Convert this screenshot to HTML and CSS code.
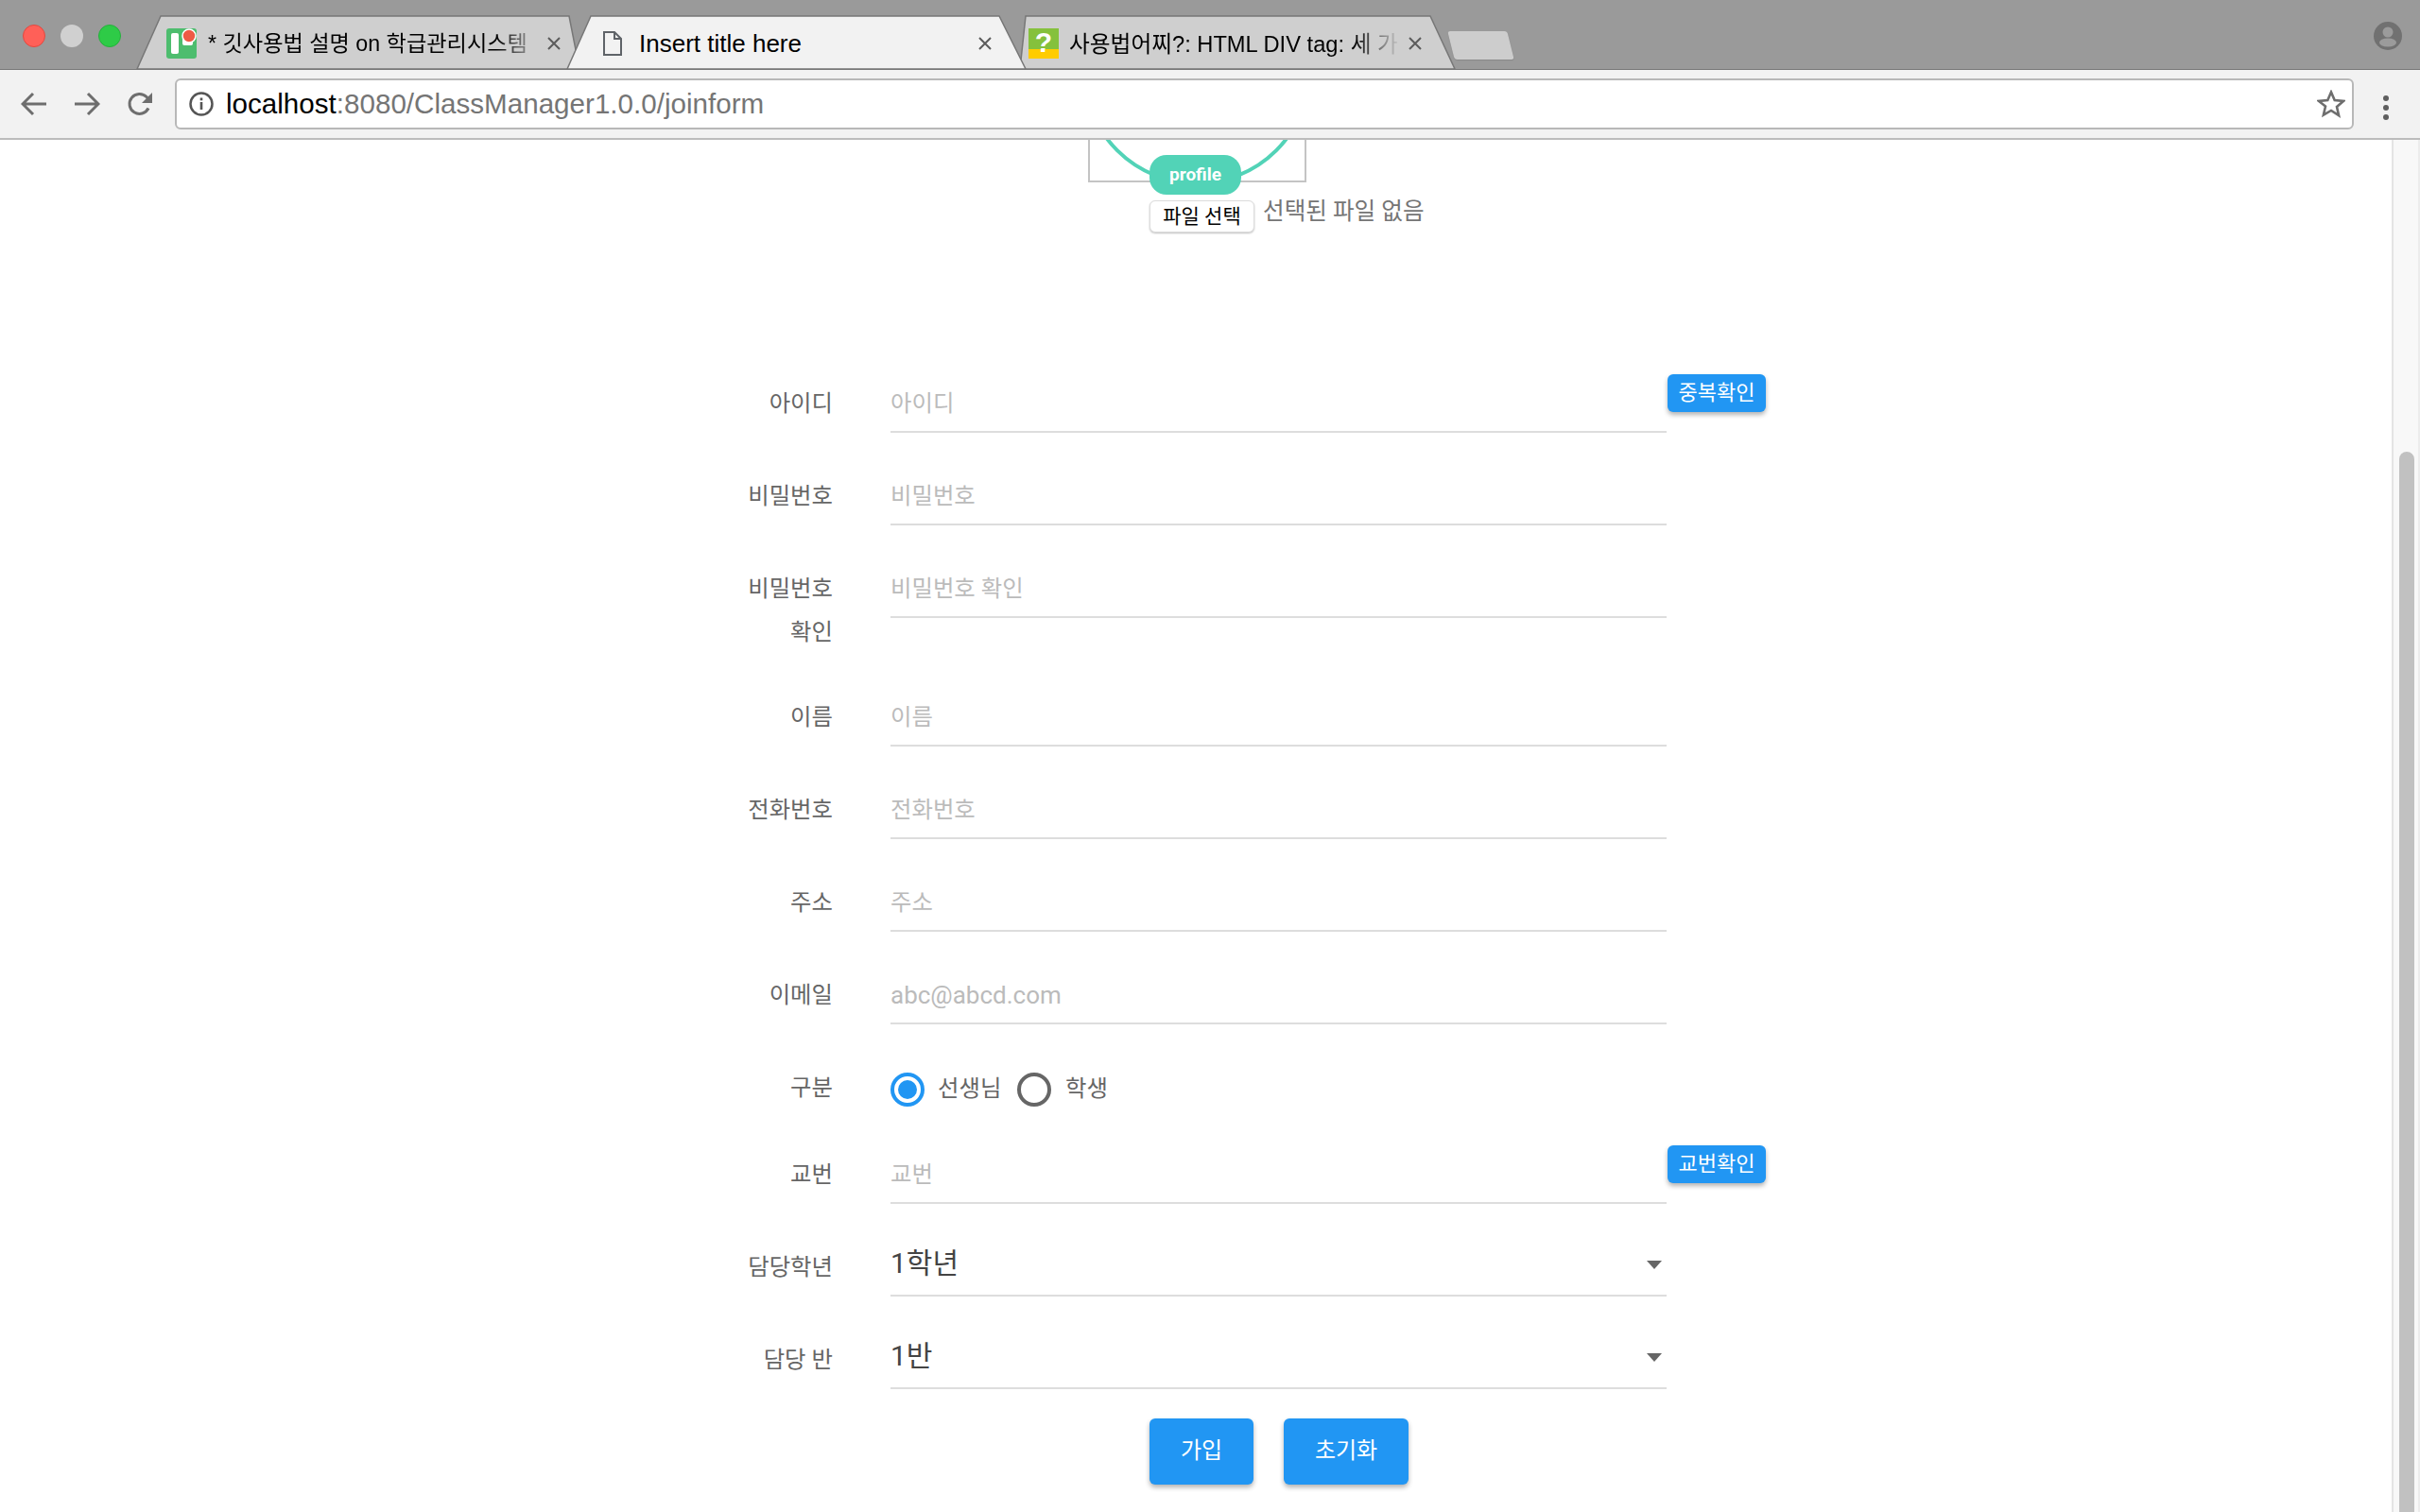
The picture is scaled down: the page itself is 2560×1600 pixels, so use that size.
FILE: index.html
```html
<!DOCTYPE html>
<html lang="ko">
<head>
<meta charset="utf-8">
<title>Insert title here</title>
<link rel="stylesheet" href="styles.css">
</head>
<body>
<div class="window">
  <header class="tabstrip">
    <div class="lights"><span class="light red"></span><span class="light grey"></span><span class="light green"></span></div>
    <div class="tabs">
      <div class="tab tab-one">
        <svg class="tab-shape" viewBox="0 0 468 57" preserveAspectRatio="none"><polygon points="0,57 25,1 457,1 468,57" fill="#cfcfcf" stroke="#777" stroke-width="1.5"/></svg>
        <svg class="favicon" viewBox="0 0 32 32"><rect width="32" height="32" rx="3" fill="#4dbd6e"/><rect x="5" y="5" width="8" height="22" rx="2" fill="#fff"/><rect x="17" y="5" width="11" height="13" rx="2" fill="#fff"/><circle cx="24" cy="8" r="7" fill="#ee5a45" stroke="#fff" stroke-width="1.5"/></svg>
        <span class="tab-title">* 깃사용법 설명 on 학급관리시스템</span>
        <svg class="close" viewBox="0 0 14 14"><path d="M1 1l12 12M13 1L1 13" stroke="#5c5c5c" stroke-width="2" fill="none"/></svg>
      </div>
      <div class="tab tab-two">
        <svg class="tab-shape" viewBox="0 0 485 57" preserveAspectRatio="none"><polygon points="0,57 25,1 457,1 485,57" fill="#f2f2f2" stroke="#777" stroke-width="1.5"/></svg>
        <svg class="file-icon" viewBox="0 0 20 26"><path d="M1 1h11l7 7v17H1zM12 1v7h7" fill="none" stroke="#5f6368" stroke-width="2"/></svg>
        <span class="tab-title">Insert title here</span>
        <svg class="close" viewBox="0 0 14 14"><path d="M1 1l12 12M13 1L1 13" stroke="#5c5c5c" stroke-width="2" fill="none"/></svg>
      </div>
      <div class="tab tab-three">
        <svg class="tab-shape" viewBox="0 0 454 57" preserveAspectRatio="none"><polygon points="0,57 -6,57 0,1 428,1 454,57" fill="#cfcfcf" stroke="#777" stroke-width="1.5"/></svg>
        <svg class="favicon" viewBox="0 0 32 32"><rect width="32" height="22" fill="#85c13c"/><rect y="22" width="32" height="10" fill="#ffcc00"/><text x="16" y="25" class="q-mark">?</text></svg>
        <span class="tab-title">사용법어찌?: HTML DIV tag: 세 가</span>
        <svg class="close" viewBox="0 0 14 14"><path d="M1 1l12 12M13 1L1 13" stroke="#5c5c5c" stroke-width="2" fill="none"/></svg>
      </div>
      <span class="new-tab"></span>
    </div>
    <svg class="avatar" viewBox="0 0 30 30"><circle cx="15" cy="15" r="15" fill="#717171"/><circle cx="15" cy="11" r="5.5" fill="#9b9b9b"/><ellipse cx="15" cy="22" rx="9" ry="4.5" fill="#9b9b9b"/></svg>
  </header>

  <nav class="toolbar">
    <svg class="nav-icon" viewBox="0 0 28 26"><path d="M27 13H3M13 2L2 13l11 11" fill="none" stroke="#6e6e6e" stroke-width="3"/></svg>
    <svg class="nav-icon" viewBox="0 0 28 26"><path d="M1 13h24M15 2l11 11-11 11" fill="none" stroke="#6e6e6e" stroke-width="3"/></svg>
    <svg class="nav-icon" viewBox="0 0 28 26"><path d="M23 17.500A10.500 10.500 0 1 1 21 5.500L24 9" fill="none" stroke="#6e6e6e" stroke-width="3"/><path d="M27 1v11H16z" fill="#6e6e6e"/></svg>
    <div class="omnibox">
      <svg class="info" viewBox="0 0 26 26"><circle cx="13" cy="13" r="11.500" fill="none" stroke="#555" stroke-width="2.500"/><rect x="11.700" y="11" width="2.600" height="8" fill="#555"/><rect x="11.700" y="6.500" width="2.600" height="2.800" fill="#555"/></svg>
      <span class="url"><span class="host">localhost</span>:8080/ClassManager1.0.0/joinform</span>
      <svg class="star" viewBox="0 0 30 30"><path d="M15 2.500l3.700 8.500 9.300.9-7 6.100 2.100 9.100L15 22l-8.100 4.700L9 17.500 2 11.900l9.300-.9z" fill="none" stroke="#6e6e6e" stroke-width="2.600"/></svg>
    </div>
    <div class="menu-dots"><span></span><span></span><span></span></div>
  </nav>

  <div class="viewport">
    <main class="page">
      <section class="profile">
        <div class="photo-box">
          <span class="photo-ring"></span>
          <span class="photo-tag">profile</span>
        </div>
        <div class="file-row">
          <span class="file-btn">파일 선택</span>
          <span class="file-name">선택된 파일 없음</span>
        </div>
      </section>

      <form class="form">
        <div class="row">
          <label class="label">아이디</label>
          <div class="field"><span class="placeholder">아이디</span></div>
          <span class="mini-btn">중복확인</span>
        </div>
        <div class="row">
          <label class="label">비밀번호</label>
          <div class="field"><span class="placeholder">비밀번호</span></div>
        </div>
        <div class="row">
          <label class="label">비밀번호 확인</label>
          <div class="field"><span class="placeholder">비밀번호 확인</span></div>
        </div>
        <div class="row">
          <label class="label">이름</label>
          <div class="field"><span class="placeholder">이름</span></div>
        </div>
        <div class="row">
          <label class="label">전화번호</label>
          <div class="field"><span class="placeholder">전화번호</span></div>
        </div>
        <div class="row">
          <label class="label">주소</label>
          <div class="field"><span class="placeholder">주소</span></div>
        </div>
        <div class="row">
          <label class="label">이메일</label>
          <div class="field"><span class="placeholder placeholder-latin">abc@abcd.com</span></div>
        </div>
        <div class="row radio-row">
          <label class="label">구분</label>
          <div class="radios">
            <span class="radio checked"></span><span class="radio-text">선생님</span>
            <span class="radio"></span><span class="radio-text">학생</span>
          </div>
        </div>
        <div class="row">
          <label class="label">교번</label>
          <div class="field"><span class="placeholder">교번</span></div>
          <span class="mini-btn">교번확인</span>
        </div>
        <div class="row">
          <label class="label">담당학년</label>
          <div class="field select"><span class="select-value">1학년</span><span class="caret"></span></div>
        </div>
        <div class="row">
          <label class="label">담당 반</label>
          <div class="field select"><span class="select-value">1반</span><span class="caret"></span></div>
        </div>
        <div class="actions">
          <span class="btn btn-join">가입</span>
          <span class="btn btn-reset">초기화</span>
        </div>
      </form>
    </main>
    <aside class="scrollbar"><span class="thumb"></span></aside>
  </div>
</div>
</body>
</html>
```

FILE: styles.css
```css
* { box-sizing: border-box; }
html, body { margin: 0; height: 100%; overflow: hidden; background: #fff; }
.window { display: flex; flex-direction: column; width: 2560px; height: 1600px; font-family: "Roboto", "Noto Sans CJK KR", sans-serif; }

/* tab strip */
.tabstrip { position: relative; display: flex; height: 74px; background: #9a9a9a; border-bottom: 1px solid #777; flex: none; }
.lights { display: flex; gap: 16px; padding: 26px 0 0 24px; width: 145px; flex: none; }
.light { width: 24px; height: 24px; border-radius: 50%; }
.red { background: #ff6058; border: 1px solid #e2483f; }
.grey { background: #d0d0d0; }
.green { background: #2ecb47; border: 1px solid #25b03c; }
.tabs { display: flex; align-items: flex-start; padding-top: 16px; flex: 1; }
.tab { position: relative; display: flex; align-items: center; height: 57px; padding-top: 3px; font: 24px "Liberation Sans", "Noto Sans CJK KR", sans-serif; color: #000; flex: none; }
.tab-shape { position: absolute; left: 0; top: 0; width: 100%; height: 100%; overflow: visible; }
.tab-one { width: 468px; padding-left: 31px; padding-right: 20px; margin-right: -13px; font-size: 23.200px; }
.tab-two { width: 485px; padding-left: 38px; padding-right: 36px; font-size: 26px; z-index: 2; }
.tab-three { width: 454px; padding-left: 3px; padding-right: 35px; font-size: 23.700px; }
.favicon, .file-icon, .tab-title, .close { position: relative; flex: none; }
.favicon { width: 32px; height: 32px; }
.file-icon { width: 20px; height: 26px; }
.tab-title { white-space: nowrap; }
.tab-one .tab-title { margin: -4px 0 0 12px; -webkit-mask-image: linear-gradient(90deg, #000 90%, rgba(0,0,0,.35)); mask-image: linear-gradient(90deg, #000 90%, rgba(0,0,0,.35)); }
.tab-two .tab-title { margin-left: 18px; }
.tab-three .tab-title { margin: -3px 0 0 11px; -webkit-mask-image: linear-gradient(90deg, #000 86%, rgba(0,0,0,.05)); mask-image: linear-gradient(90deg, #000 86%, rgba(0,0,0,.05)); }
.close { width: 14px; height: 14px; margin-left: auto; }
.q-mark { font: bold 30px "Liberation Sans", sans-serif; fill: #fff; text-anchor: middle; }
.new-tab { width: 63px; height: 30px; margin: 17px 0 0 -4px; background: #cdcdcd; border-radius: 3px; transform: skewX(14deg); box-shadow: 0 1px 1px #888; }
.avatar { position: absolute; right: 19px; top: 23px; width: 30px; height: 30px; }

/* toolbar */
.toolbar { display: flex; align-items: flex-start; height: 74px; background: #f2f2f2; border-bottom: 2px solid #bcbcbc; padding: 9px 0 0 22px; flex: none; }
.nav-icon { width: 28px; height: 26px; margin: 14px 28px 0 0; flex: none; }
.nav-icon:nth-child(3) { margin-right: 23px; }
.omnibox { display: flex; align-items: center; width: 2305px; height: 54px; background: #fff; border: 2px solid #b8b8b8; border-radius: 6px; padding: 0 7px 0 13px; flex: none; }
.info { width: 26px; height: 26px; flex: none; }
.url { margin-left: 13px; flex: 1; font: 29.600px "Liberation Sans", sans-serif; color: #757575; white-space: nowrap; }
.host { color: #000; }
.star { width: 30px; height: 30px; flex: none; }
.menu-dots { display: flex; flex-direction: column; gap: 4px; margin: 18px 0 0 31px; }
.menu-dots span { width: 6px; height: 6px; border-radius: 50%; background: #5f5f5f; }

/* viewport */
.viewport { display: flex; flex: 1; min-height: 0; }
.page { flex: 1; min-width: 0; overflow: hidden; }
.scrollbar { display: flex; width: 30px; flex: none; background: #f8f8f8; border-left: 2px solid #e4e4e4; border-right: 2px solid #ececec; padding: 330px 4px 0 6px; }
.thumb { width: 16px; height: 100%; border-radius: 8px 8px 0 0; background: #c1c1c1; }

/* profile */
.profile { display: flow-root; height: 256px; padding-left: 1151px; }
.photo-box { position: relative; width: 231px; height: 230px; margin-top: -185px; border: 2px solid #c4c4c4; }
.photo-ring { position: absolute; left: -8px; top: -11px; width: 242px; height: 242px; border-radius: 50%; border: 4px solid #52d3b7; }
.photo-tag { position: absolute; left: 63px; bottom: -15px; width: 97px; height: 42px; border-radius: 18px; background: #52d3b7; color: #fff; font-size: 19px; font-weight: 700; line-height: 42px; text-align: center; }
.file-row { display: flex; align-items: flex-start; margin: 19px 0 0 65px; }
.file-btn { width: 111px; height: 34px; background: #fff; border: 1px solid #ddd; border-radius: 6px; box-shadow: 0 1px 2px rgba(0,0,0,.25); color: #000; font-size: 21px; line-height: 32px; text-align: center; }
.file-name { margin: -5px 0 0 9px; font-size: 24.600px; line-height: 34px; color: #757575; white-space: nowrap; }

/* form */
.form { display: flex; flex-direction: column; gap: 44px; padding-left: 780px; }
.row { display: flex; align-items: flex-start; }
.radio-row { height: 48px; }
.label { width: 101px; flex: none; margin-right: 61px; text-align: right; font-size: 24.400px; line-height: 46px; color: #666; }
.field { display: flex; align-items: flex-start; width: 821px; height: 54px; flex: none; border-bottom: 2px solid #ddd; }
.placeholder { font-size: 24.400px; line-height: 46px; color: #bbb; }
.placeholder-latin { font-size: 26px; }
.mini-btn { width: 104px; height: 40px; flex: none; margin: -8px 0 0 1px; background: #2196f3; border-radius: 6px; box-shadow: 0 3px 5px rgba(0,0,0,.3); color: #fff; font-size: 22px; line-height: 40px; text-align: center; }
.radios { display: flex; align-items: center; height: 36px; margin-top: 7px; }
.radio { position: relative; width: 36px; height: 36px; flex: none; border-radius: 50%; border: 4px solid #666; }
.radio.checked { border-color: #2196f3; }
.radio.checked::after { content: ""; position: absolute; left: 4px; top: 4px; width: 20px; height: 20px; border-radius: 50%; background: #2196f3; }
.radio-text { margin: -3px 0 0 14px; width: 84px; font-size: 24.400px; line-height: 36px; color: #666; }
.radio-text:last-child { width: auto; margin-left: 15px; }
.select { position: relative; }
.select-value { font-size: 30px; line-height: 38px; color: #444; }
.caret { position: absolute; right: 5px; top: 16px; border-style: solid; border-width: 9px 8px 0; border-color: #666 transparent transparent; }
.actions { display: flex; gap: 32px; margin: -13px 0 0 436px; }
.btn { height: 70px; background: #2196f3; border-radius: 6px; box-shadow: 0 3px 5px rgba(0,0,0,.3); color: #fff; font-size: 24px; line-height: 68px; text-align: center; }
.btn-join { width: 110px; }
.btn-reset { width: 132px; }
```
